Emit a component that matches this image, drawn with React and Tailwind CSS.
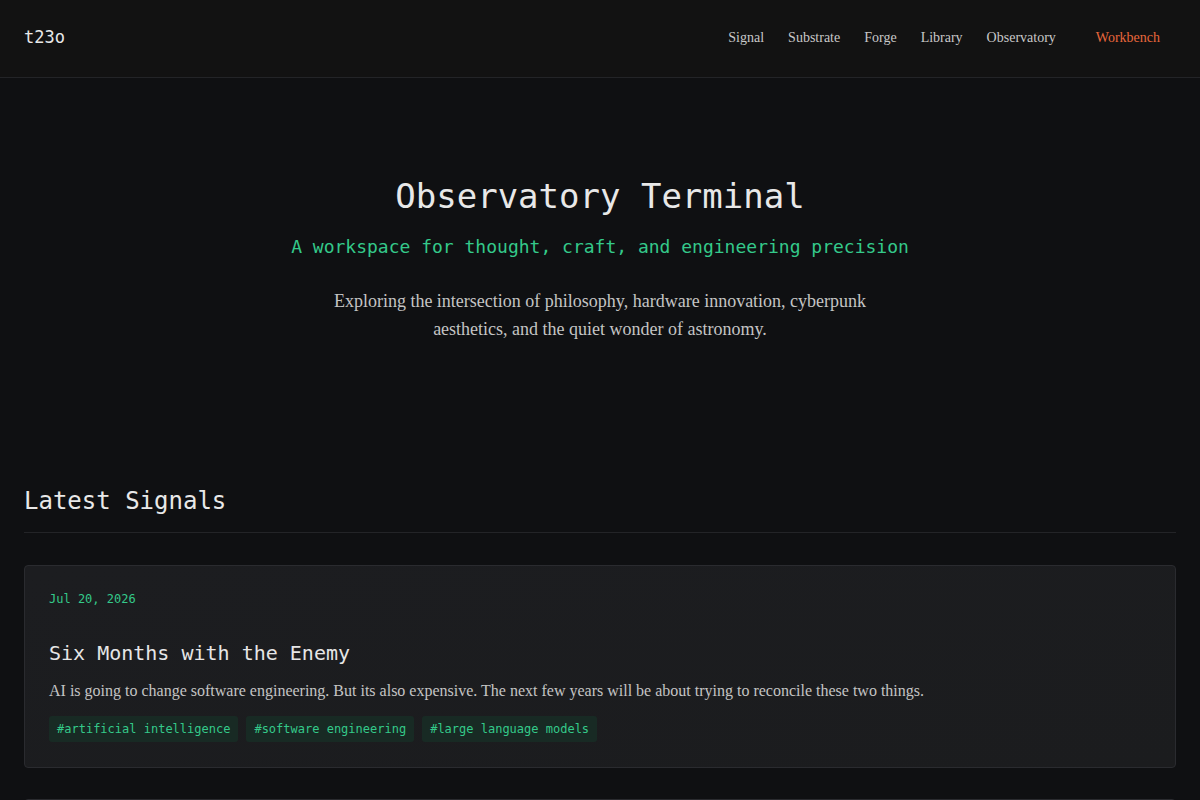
const mono = "font-['DejaVu_Sans_Mono',monospace]";
const serif = "font-['Liberation_Serif',serif]";

const navLinks = ['Signal', 'Substrate', 'Forge', 'Library', 'Observatory'];

const posts = [
  {
    date: 'Jul 20, 2026',
    title: 'Six Months with the Enemy',
    summary:
      'AI is going to change software engineering. But its also expensive. The next few years will be about trying to reconcile these two things.',
    tags: ['artificial intelligence', 'software engineering', 'large language models'],
  },
  {
    date: 'Jun 02, 2026',
    title: 'Notes from the Substrate',
    summary: 'Hardware is the quiet part of every story.',
    tags: ['hardware'],
  },
];

function PostCard({ post }) {
  return (
    <article className="rounded-[4px] border border-[#2a2b2f] bg-gradient-to-br from-[#1c1d20] to-[#1b1c1e] px-6 pb-[25px] pt-[25px]">
      <div className={`${mono} text-xs leading-4 text-[#34c98a]`}>{post.date}</div>
      <h3 className={`${mono} mt-8 text-xl leading-7 text-[#e6e6e6]`}>{post.title}</h3>
      <p className={`${serif} mt-3 text-base leading-6 text-[#c4c4c4]`}>{post.summary}</p>
      <div className="mt-[13px] flex flex-wrap gap-2">
        {post.tags.map(tag => (
          <span
            key={tag}
            className={`${mono} rounded-[3px] bg-[#173026]/70 px-2 py-[5px] text-xs leading-4 text-[#34c98a]`}
          >
            #{tag}
          </span>
        ))}
      </div>
    </article>
  );
}

export default function App() {
  return (
    <div className="min-h-screen bg-[#0f1012]">
      {/* Header */}
      <header className="flex h-[78px] items-center justify-between border-b border-[#232427] bg-[#121212] px-6 pb-[2px]">
        <div className={`${mono} text-[17px] text-[#e8e8e8]`}>t23o</div>
        <nav className={`${serif} flex items-center gap-6 text-sm text-[#c8c8c8]`}>
          {navLinks.map(link => (
            <a key={link} href="#">{link}</a>
          ))}
          <a href="#" className="px-4 text-[#e8673c]">Workbench</a>
        </nav>
      </header>

      {/* Hero */}
      <section className="flex flex-col items-center px-6 pb-24 pt-[98px] text-center">
        <h1 className={`${mono} text-[34px] leading-10 text-[#e8e8e8]`}>Observatory Terminal</h1>
        <p className={`${mono} mt-[17px] text-lg leading-7 text-[#34c98a]`}>
          A workspace for thought, craft, and engineering precision
        </p>
        <p className={`${serif} mt-[26px] max-w-xl text-lg leading-7 text-[#c4c4c4]`}>
          Exploring the intersection of philosophy, hardware innovation, cyberpunk aesthetics, and the quiet wonder of astronomy.
        </p>
      </section>

      {/* Latest signals */}
      <section className="px-6 pb-16 pt-[46px]">
        <h2 className={`${mono} border-b border-[#232427] pb-[15px] text-2xl leading-8 text-[#e8e8e8]`}>
          Latest Signals
        </h2>
        <div className="mt-8 flex flex-col gap-[31px]">
          {posts.map(post => (
            <PostCard key={post.title} post={post} />
          ))}
        </div>
      </section>
    </div>
  );
}
